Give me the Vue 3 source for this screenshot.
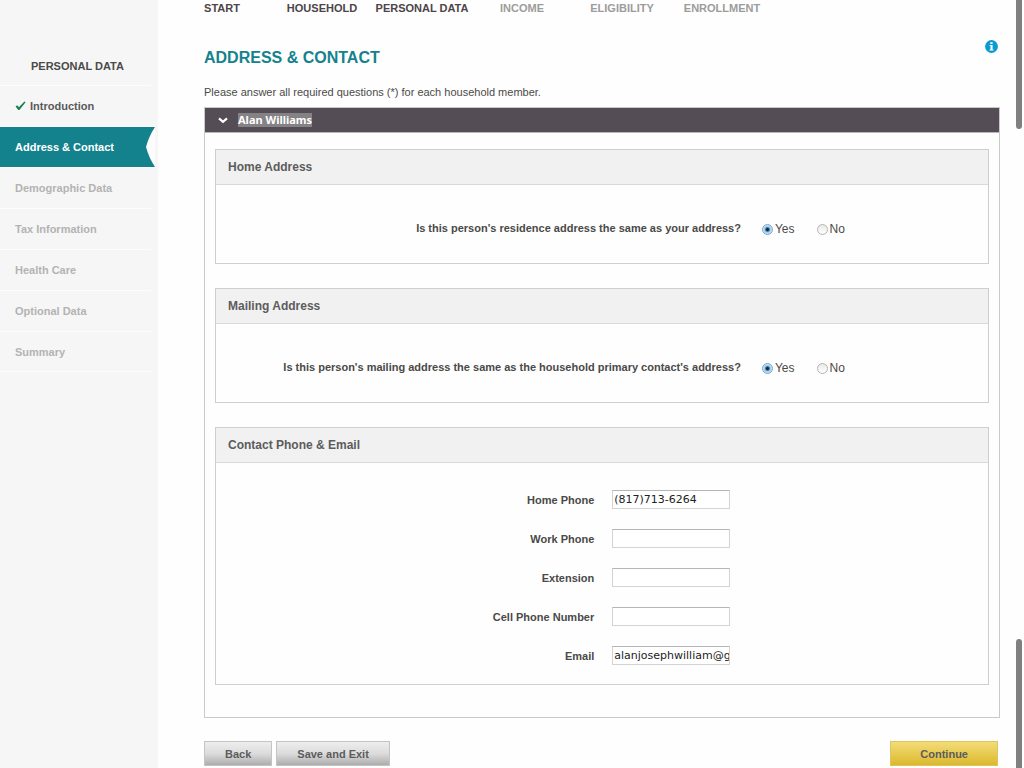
<script setup>
import { ref } from 'vue'

const steps = [
  { label: 'START', done: true },
  { label: 'HOUSEHOLD', done: true },
  { label: 'PERSONAL DATA', done: true },
  { label: 'INCOME', done: false },
  { label: 'ELIGIBILITY', done: false },
  { label: 'ENROLLMENT', done: false },
]

const sections = [
  { label: 'Introduction', state: 'done' },
  { label: 'Address & Contact', state: 'active' },
  { label: 'Demographic Data', state: 'todo' },
  { label: 'Tax Information', state: 'todo' },
  { label: 'Health Care', state: 'todo' },
  { label: 'Optional Data', state: 'todo' },
  { label: 'Summary', state: 'todo' },
]

const questions = ref([
  {
    id: 'home',
    title: 'Home Address',
    text: "Is this person's residence address the same as your address?",
    answer: 'Yes',
  },
  {
    id: 'mailing',
    title: 'Mailing Address',
    text: "Is this person's mailing address the same as the household primary contact's address?",
    answer: 'Yes',
  },
])

const fields = ref([
  { id: 'home-phone', label: 'Home Phone', value: '(817)713-6264' },
  { id: 'work-phone', label: 'Work Phone', value: '' },
  { id: 'extension', label: 'Extension', value: '' },
  { id: 'cell-phone', label: 'Cell Phone Number', value: '' },
  { id: 'email', label: 'Email', value: 'alanjosephwilliam@g' },
])
</script>

<template>
  <div class="page">
    <aside class="sidebar">
      <h2 class="sidebar-title">PERSONAL DATA</h2>
      <nav aria-label="Personal data sections">
        <a v-for="s in sections" :key="s.label" href="#" class="section" :class="s.state">
          <svg v-if="s.state === 'done'" class="check" viewBox="0 0 11 10" aria-hidden="true">
            <path d="M0.6 5.4 L2.2 4.3 L3.9 6.3 L9.4 0.6 L10.6 1.2 L4.4 9 L3.3 9 Z" fill="#16804a" />
          </svg>
          <span>{{ s.label }}</span>
          <svg v-if="s.state === 'active'" class="notch" viewBox="0 0 10 40" preserveAspectRatio="none" aria-hidden="true">
            <path d="M10 0 Q4 9 1 20 Q4 31 10 40 Z" fill="#fcfcfc" />
          </svg>
        </a>
      </nav>
    </aside>

    <main class="main">
      <nav class="steps" aria-label="Application steps">
        <a v-for="s in steps" :key="s.label" href="#" :class="{ done: s.done }">{{ s.label }}</a>
      </nav>

      <header class="heading">
        <h1>ADDRESS &amp; CONTACT</h1>
        <button class="info" type="button" aria-label="Help">
          <svg viewBox="0 0 13 13" aria-hidden="true">
            <circle cx="6.5" cy="6.5" r="6.4" fill="#0a9bd2" />
            <path d="M5.3 2.2h2.3v1.9H5.3z M4.6 5h3v4.4h0.9v1.1H4.5V9.4h1V6.1h-0.9z" fill="#fff" />
          </svg>
        </button>
      </header>
      <p class="intro">Please answer all required questions (*) for each household member.</p>

      <section class="member">
        <h2 class="member-head">
          <svg class="chevron" viewBox="0 0 10 7" aria-hidden="true">
            <path d="M1 1.3 L5 4.8 L9 1.3" fill="none" stroke="#fff" stroke-width="2.2" />
          </svg>
          <span class="member-name">Alan Williams</span>
        </h2>

        <div class="panels">
          <section v-for="q in questions" :key="q.id" class="panel">
            <h3>{{ q.title }}</h3>
            <div class="question" role="radiogroup" :aria-labelledby="q.id + '-q'">
              <span :id="q.id + '-q'" class="label">{{ q.text }}</span>
              <div class="choices">
                <label v-for="c in ['Yes', 'No']" :key="c">
                  <input v-model="q.answer" type="radio" :name="q.id" :value="c" />{{ c }}
                </label>
              </div>
            </div>
          </section>

          <section class="panel">
            <h3>Contact Phone &amp; Email</h3>
            <div class="fields">
              <div v-for="f in fields" :key="f.id" class="field">
                <label class="label" :for="f.id">{{ f.label }}</label>
                <input :id="f.id" v-model="f.value" type="text" />
              </div>
            </div>
          </section>
        </div>
      </section>

      <footer class="actions">
        <button type="button" class="btn">Back</button>
        <button type="button" class="btn">Save and Exit</button>
        <button type="button" class="btn primary">Continue</button>
      </footer>
    </main>

    <span class="thumb upper"></span>
    <span class="thumb lower"></span>
  </div>
</template>

<style>
html,
body {
  background: #fefefe;
  overflow: hidden;
}
</style>

<style scoped>
* {
  box-sizing: border-box;
}
.page {
  position: relative;
  display: flex;
  min-height: 100vh;
  font-family: 'Liberation Sans', Arial, sans-serif;
  font-size: 11px;
  line-height: 14px;
  color: #4a4a48;
}
h1,
h2,
h3,
p {
  margin: 0;
}
a {
  text-decoration: none;
}
.sidebar {
  flex: 0 0 158px;
  background: #f6f6f6;
}
.sidebar-title {
  padding: 59px 0 12px 31px;
  font-size: 11px;
  line-height: 14px;
}
.section {
  position: relative;
  display: flex;
  align-items: center;
  gap: 4px;
  width: 151px;
  height: 41px;
  padding-left: 15px;
  border-top: 1px solid #fdfdfd;
  font-weight: bold;
  color: #b3b3b3;
}
.section:last-child {
  border-bottom: 1px solid #fdfdfd;
}
.section.done {
  color: #5a5a5a;
}
.section.active {
  width: 155px;
  background: #14828d;
  color: #fff;
}
.check {
  width: 11px;
  height: 10px;
}
.notch {
  position: absolute;
  right: 0;
  top: 0;
  width: 10px;
  height: 100%;
}
.main {
  flex: 1;
  padding: 0 24px 2px 46px;
}
.steps {
  display: grid;
  grid-template-columns: repeat(6, 100px);
  margin-left: -32px;
  padding-top: 1px;
  text-align: center;
}
.steps a {
  font-weight: bold;
  color: #9c9c9c;
}
.steps a.done {
  color: #4c4549;
}
.heading {
  display: flex;
  justify-content: space-between;
  align-items: flex-start;
  padding-top: 25px;
}
.heading h1 {
  padding-top: 8px;
  font-size: 16px;
  line-height: 20px;
  color: #14828d;
}
.info {
  display: block;
  width: 13px;
  height: 13px;
  margin-right: 2px;
  padding: 0;
  border: 0;
  background: none;
}
.info svg {
  display: block;
  width: 13px;
  height: 13px;
}
.intro {
  padding: 17px 0 8px;
}
.member {
  border: 1px solid #c9c9c9;
}
.member-head {
  display: flex;
  align-items: center;
  gap: 10px;
  height: 24px;
  padding-left: 13px;
  background: #554d55;
  box-shadow: 0 1px #bab7ba;
}
.chevron {
  width: 10px;
  height: 7px;
}
.member-name {
  font-family: 'Noto Sans', 'Open Sans', sans-serif;
  font-size: 11px;
  line-height: 14px;
  color: #fff;
  background: #858285;
}
.panels {
  display: flex;
  flex-direction: column;
  gap: 24px;
  padding: 17px 10px 32px;
}
.panel {
  border: 1px solid #cfcfcf;
}
.panel h3 {
  height: 35px;
  padding-left: 12px;
  border-bottom: 1px solid #d9d9d9;
  background: #f1f1f1;
  font-size: 12px;
  line-height: 34px;
  color: #5c5c5c;
}
.label {
  font-weight: bold;
  text-align: right;
}
.question {
  display: grid;
  grid-template-columns: 68% 1fr;
  column-gap: 21px;
  align-items: start;
  padding: 36px 0 27px;
}
.choices {
  display: flex;
  gap: 22px;
  padding-top: 1px;
  font-size: 12px;
}
.choices label {
  display: flex;
  align-items: center;
  gap: 2px;
}
.choices input {
  appearance: none;
  width: 11px;
  height: 11px;
  margin: 0;
  border: 1px solid #b4b4b4;
  border-radius: 50%;
  background: linear-gradient(#e9e9e9, #fff);
}
.choices input:checked {
  border-color: #7fa5c8;
  background: radial-gradient(circle, #10293d 0 1px, #9fd0f5 3px, #cdebff 5px);
}
.fields {
  display: flex;
  flex-direction: column;
  gap: 20px;
  padding: 27px 0 19px;
}
.field {
  display: grid;
  grid-template-columns: 49% 118px;
  column-gap: 18px;
  align-items: center;
}
.field input {
  width: 100%;
  height: 19px;
  padding: 0 0 0 1px;
  border: 1px solid #d4d4d4;
  border-top-color: #b5b5b5;
  background: #fff;
  font-family: 'DejaVu Sans', sans-serif;
  font-size: 11px;
  color: #222;
}
.actions {
  display: flex;
  gap: 4px;
  padding-top: 23px;
}
.btn {
  height: 25px;
  padding: 0 20px;
  border: 1px solid #c4c4c4;
  background: linear-gradient(#ededed, #dcdcdc 50%, #adadad);
  font-family: inherit;
  font-size: 11px;
  font-weight: bold;
  color: #5c5c5c;
}
.btn.primary {
  margin: 0 2px 0 auto;
  padding: 0 29px;
  border-color: #e0c55a;
  background: linear-gradient(#f3dc78, #dbb92e);
}
.thumb {
  position: absolute;
  right: 2px;
  width: 6px;
  background: #808080;
}
.thumb.upper {
  top: 0;
  height: 129px;
  border-radius: 0 0 3px 3px;
}
.thumb.lower {
  bottom: 0;
  height: 129px;
  border-radius: 3px 3px 0 0;
}
</style>
